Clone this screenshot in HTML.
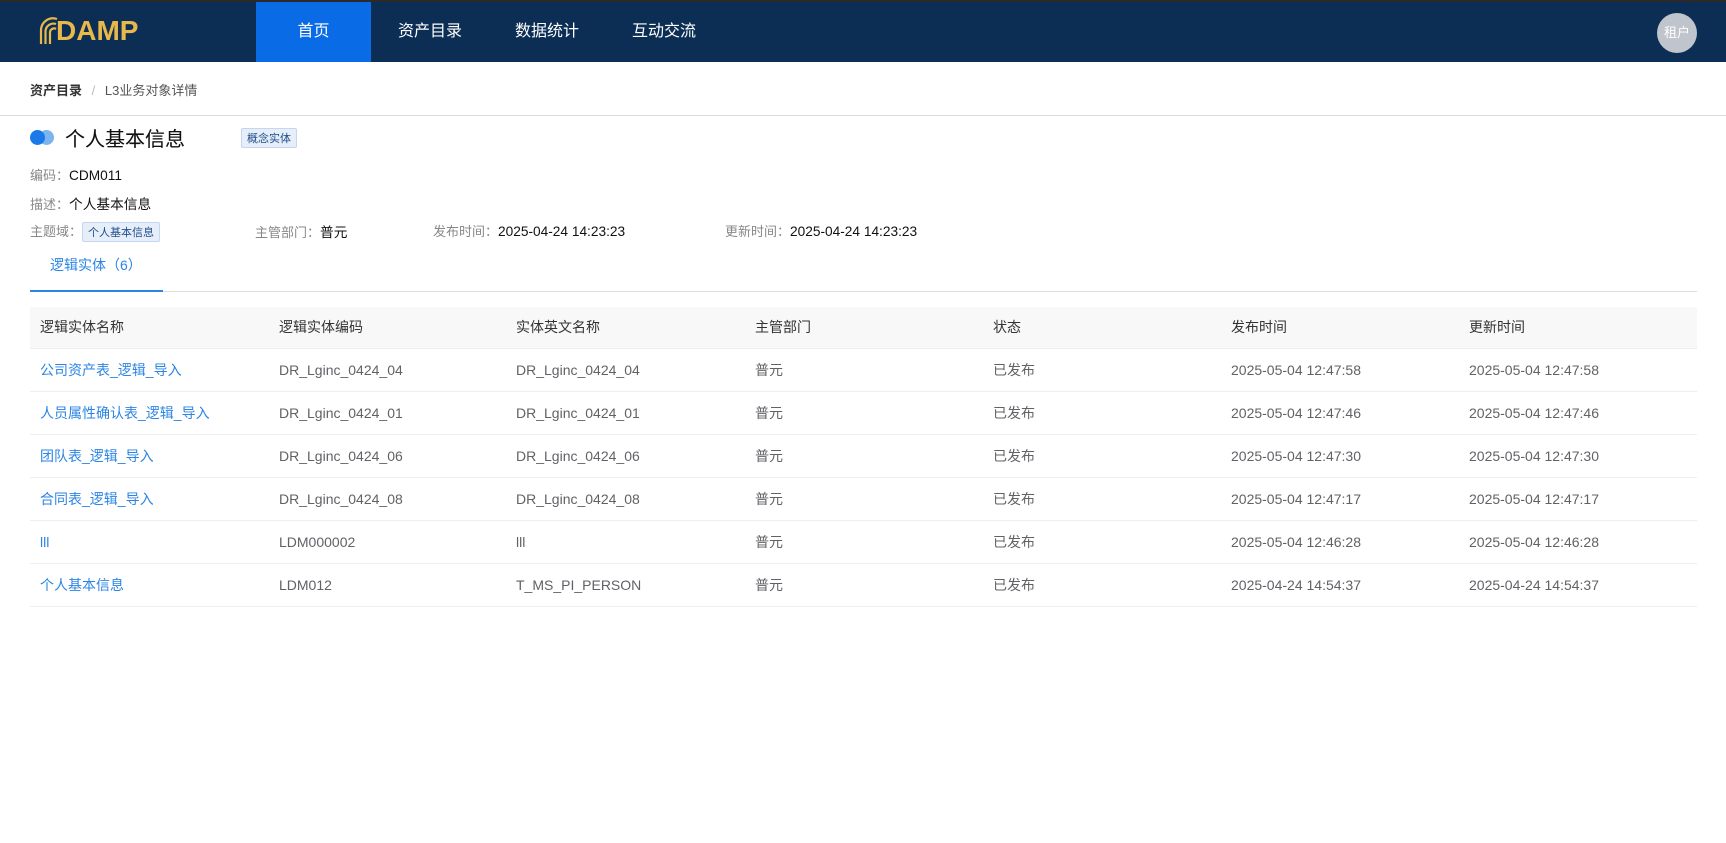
<!DOCTYPE html>
<html><head><meta charset="utf-8"><style>
*{margin:0;padding:0;box-sizing:border-box}
body{width:1726px;height:843px;background:#fff;font-family:"Liberation Sans","Noto Sans CJK SC",sans-serif;font-size:14px;color:#333;position:relative;overflow:hidden}
.hdr{position:absolute;left:0;top:0;width:1726px;height:62px;background:#0c2e55;border-top:2px solid #2a2a2a}
.logo{position:absolute;left:56px;top:13px;font-weight:bold;font-size:28px;color:#e8b84a;letter-spacing:0px}
.nav{position:absolute;top:0;height:60px;line-height:60px;color:#fff;font-size:16px;text-align:center}
.av{position:absolute;left:1657px;top:11px;width:40px;height:40px;border-radius:50%;background:#c0c4cc;color:#fff;font-size:13px;line-height:40px;text-align:center}
.bc{position:absolute;left:30px;top:80px;font-size:13px;color:#555}
.line{position:absolute;left:0;top:115px;width:1726px;height:1px;background:#dcdcdc}
.abs{position:absolute;white-space:nowrap}
.lbl{color:#888;font-size:13px}
.val{color:#111;font-size:13.7px}
.tag{display:inline-block;background:#e6eef9;border:1px solid #c4d6f0;color:#1f4e8c;font-size:11px;padding:1px 5px;border-radius:2px}
table{position:absolute;left:30px;top:307px;width:1667px;border-collapse:collapse;font-size:14px}
td,th{height:43px;padding-left:10px;text-align:left;font-weight:normal;border-bottom:1px solid #ebeef5;color:#606266}
th{background:#f8f8f9;color:#333;height:41px}
td a{color:#2b85e4;text-decoration:none}
</style></head><body>
<div class="hdr">
<svg style="position:absolute;left:39px;top:14px" width="20" height="30" viewBox="0 0 20 30" fill="none" stroke="#e8b84a" stroke-width="2.2">
<path d="M2 28 V14 A12 12 0 0 1 18 3"/><path d="M6.5 28 V15 A8 8 0 0 1 17 8"/><path d="M11 28 V16 A4 4 0 0 1 17 13"/></svg>
<div class="logo">DAMP</div>
<div class="nav" style="left:256px;width:115px;background:#0a6be6">首页</div>
<div class="nav" style="left:380px;width:100px">资产目录</div>
<div class="nav" style="left:497px;width:100px">数据统计</div>
<div class="nav" style="left:614px;width:100px">互动交流</div>
<div class="av">租户</div>
</div>
<div class="bc"><b style="color:#333">资产目录</b> <span style="color:#bbb;margin:0 6px">/</span> L3业务对象详情</div>
<div class="line"></div>
<div class="abs" style="left:30px;top:130px;width:26px;height:15px">
<div style="position:absolute;left:9px;top:0;width:15px;height:15px;border-radius:50%;background:#7cb4f0"></div>
<div style="position:absolute;left:0;top:0;width:15px;height:15px;border-radius:50%;background:#1a7ae8"></div></div>
<div class="abs" style="left:65px;top:123px;font-size:20px;color:#111;-webkit-text-stroke:0.1px #111">个人基本信息</div>
<div class="abs" style="left:241px;top:128px"><span class="tag">概念实体</span></div>
<div class="abs" style="left:30px;top:165px"><span class="lbl">编码：</span><span class="val">CDM011</span></div>
<div class="abs" style="left:30px;top:193px"><span class="lbl">描述：</span><span class="val">个人基本信息</span></div>
<div class="abs" style="left:30px;top:221px"><span class="lbl">主题域：</span><span class="tag">个人基本信息</span></div>
<div class="abs" style="left:255px;top:221px"><span class="lbl">主管部门：</span><span class="val">普元</span></div>
<div class="abs" style="left:433px;top:221px"><span class="lbl">发布时间：</span><span class="val">2025-04-24 14:23:23</span></div>
<div class="abs" style="left:725px;top:221px"><span class="lbl">更新时间：</span><span class="val">2025-04-24 14:23:23</span></div>
<div class="abs" style="left:50px;top:255px;color:#2b85e4;font-size:14px">逻辑实体（6）</div>
<div class="abs" style="left:30px;top:291px;width:1667px;height:1px;background:#ddd"></div>
<div class="abs" style="left:30px;top:290px;width:133px;height:2px;background:#2b85e4"></div>
<table>
<colgroup><col style="width:239px"><col style="width:237px"><col style="width:239px"><col style="width:238px"><col style="width:238px"><col style="width:238px"><col></colgroup>
<tr><th>逻辑实体名称</th><th>逻辑实体编码</th><th>实体英文名称</th><th>主管部门</th><th>状态</th><th>发布时间</th><th>更新时间</th></tr>
<tr><td><a>公司资产表_逻辑_导入</a></td><td>DR_Lginc_0424_04</td><td>DR_Lginc_0424_04</td><td>普元</td><td>已发布</td><td>2025-05-04 12:47:58</td><td>2025-05-04 12:47:58</td></tr>
<tr><td><a>人员属性确认表_逻辑_导入</a></td><td>DR_Lginc_0424_01</td><td>DR_Lginc_0424_01</td><td>普元</td><td>已发布</td><td>2025-05-04 12:47:46</td><td>2025-05-04 12:47:46</td></tr>
<tr><td><a>团队表_逻辑_导入</a></td><td>DR_Lginc_0424_06</td><td>DR_Lginc_0424_06</td><td>普元</td><td>已发布</td><td>2025-05-04 12:47:30</td><td>2025-05-04 12:47:30</td></tr>
<tr><td><a>合同表_逻辑_导入</a></td><td>DR_Lginc_0424_08</td><td>DR_Lginc_0424_08</td><td>普元</td><td>已发布</td><td>2025-05-04 12:47:17</td><td>2025-05-04 12:47:17</td></tr>
<tr><td><a>lll</a></td><td>LDM000002</td><td>lll</td><td>普元</td><td>已发布</td><td>2025-05-04 12:46:28</td><td>2025-05-04 12:46:28</td></tr>
<tr><td><a>个人基本信息</a></td><td>LDM012</td><td>T_MS_PI_PERSON</td><td>普元</td><td>已发布</td><td>2025-04-24 14:54:37</td><td>2025-04-24 14:54:37</td></tr>
</table>
</body></html>
